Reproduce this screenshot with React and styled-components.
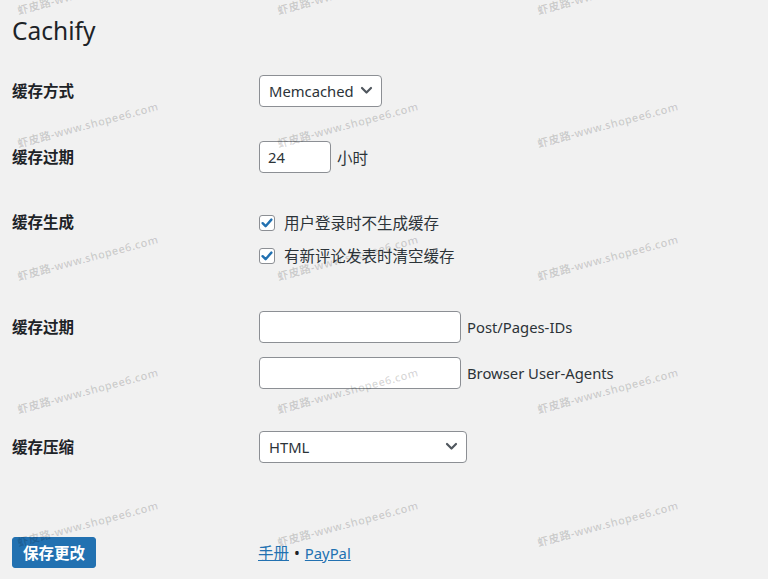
import React from "react";
import styled, { createGlobalStyle } from "styled-components";

const GlobalStyle = createGlobalStyle`
  html, body {
    margin: 0;
    padding: 0;
    background: #f1f1f1;
  }
  body {
    font-family: "Noto Sans", "Noto Sans CJK SC", sans-serif;
    color: #1d2327;
  }
  * { box-sizing: border-box; }
`;

const Page = styled.div`
  position: relative;
  min-height: 579px;
  overflow: hidden;
  padding: 0 12px;
`;

const Title = styled.h1`
  margin: 14px 0 0;
  font-size: 24.5px;
  font-weight: 400;
  line-height: 34px;
  color: #1d2327;
`;

const Row = styled.div`
  display: grid;
  grid-template-columns: 247px 1fr;
  align-items: start;
  padding-top: ${(p) => p.$space}px;
`;

const Label = styled.div`
  font-weight: 700;
  font-size: 15.5px;
  line-height: ${(p) => p.$line || 32}px;
  color: #1d2327;
`;

const Cell = styled.div`
  display: flex;
  flex-direction: column;
  gap: ${(p) => p.$gap || 0}px;
`;

const Line = styled.div`
  display: flex;
  align-items: center;
  gap: 6px;
  height: 32px;
  color: #2c3338;
`;

/* Latin copy runs a touch smaller than the CJK copy */
const Note = styled.span`
  font-size: ${(p) => (p.$latin ? 14.8 : 15.5)}px;
`;

const SelectWrap = styled.div`
  position: relative;
  width: ${(p) => p.$width}px;
  height: 32px;
`;

const Select = styled.select`
  appearance: none;
  width: 100%;
  height: 100%;
  margin: 0;
  padding: 0 24px 0 9px;
  font-family: "Noto Sans", "Noto Sans CJK SC", sans-serif;
  font-size: 14.8px;
  color: #2c3338;
  background: #fff;
  border: 1px solid #8c8f94;
  border-radius: 4px;
  outline: none;
`;

const Chevron = styled.svg`
  position: absolute;
  right: 9px;
  top: 10px;
  width: 13px;
  height: 11px;
  pointer-events: none;
`;

const TextInput = styled.input`
  width: ${(p) => p.$width}px;
  height: 32px;
  margin: 0;
  padding: 0 8px;
  font-family: "Noto Sans", "Noto Sans CJK SC", sans-serif;
  font-size: 14.8px;
  color: #2c3338;
  background: #fff;
  border: 1px solid #8c8f94;
  border-radius: 4px;
  outline: none;
`;

const CheckLine = styled.label`
  display: flex;
  align-items: center;
  gap: 9px;
  height: 33px;
  font-size: 15.5px;
  color: #2c3338;
`;

const CheckBox = styled.span`
  display: inline-flex;
  align-items: center;
  justify-content: center;
  width: 16px;
  height: 16px;
  background: #fff;
  border: 1px solid #8c8f94;
  border-radius: 3px;
  flex: none;
`;

const Button = styled.button`
  height: 31px;
  padding: 0 10px;
  font-family: "Noto Sans", "Noto Sans CJK SC", sans-serif;
  font-size: 15.5px;
  font-weight: 700;
  color: #fff;
  background: #2271b1;
  border: 1px solid #2271b1;
  border-radius: 3px;
  justify-self: start;
`;

const Links = styled.div`
  display: flex;
  align-items: center;
  height: 31px;
  gap: 5px;
  margin-left: -1px;
  font-size: 15.5px;
  color: #1d2327;
`;

const Link = styled.a`
  color: #2271b1;
  text-decoration: underline;
  font-size: ${(p) => (p.$latin ? 14.8 : 15.5)}px;
`;

const MarkLayer = styled.div`
  position: absolute;
  top: -76px;
  left: -42px;
  display: grid;
  grid-template-columns: repeat(3, 260px);
  grid-auto-rows: 133px;
  pointer-events: none;
`;

const Mark = styled.span`
  align-self: center;
  justify-self: center;
  transform: rotate(-15deg);
  white-space: nowrap;
  font-size: 11px;
  font-weight: 600;
  letter-spacing: 0.4px;
  color: rgba(0, 0, 0, 0.16);
`;

const ChevronIcon = () => (
  <Chevron viewBox="0 0 13 11">
    <polyline
      points="2,3 6.5,7.5 11,3"
      fill="none"
      stroke="#50575e"
      strokeWidth="2.2"
      strokeLinecap="round"
      strokeLinejoin="round"
    />
  </Chevron>
);

const Check = ({ children }) => (
  <CheckLine>
    <CheckBox>
      <svg width="14" height="14" viewBox="0 0 14 14">
        <polyline
          points="2.6,7.2 5.6,10.2 11.4,3.6"
          fill="none"
          stroke="#2271b1"
          strokeWidth="2.4"
          strokeLinecap="round"
          strokeLinejoin="round"
        />
      </svg>
    </CheckBox>
    {children}
  </CheckLine>
);

const marks = Array.from({ length: 15 });

export default function App() {
  return (
    <>
      <GlobalStyle />
      <Page>
        <Title>Cachify</Title>

        <Row $space={27}>
          <Label>缓存方式</Label>
          <Cell>
            <SelectWrap $width={123}>
              <Select defaultValue="memcached">
                <option value="memcached">Memcached</option>
              </Select>
              <ChevronIcon />
            </SelectWrap>
          </Cell>
        </Row>

        <Row $space={34}>
          <Label>缓存过期</Label>
          <Line>
            <TextInput $width={72} defaultValue="24" />
            <Note>小时</Note>
          </Line>
        </Row>

        <Row $space={33}>
          <Label $line={33}>缓存生成</Label>
          <Cell>
            <Check>用户登录时不生成缓存</Check>
            <Check>有新评论发表时清空缓存</Check>
          </Cell>
        </Row>

        <Row $space={39}>
          <Label>缓存过期</Label>
          <Cell $gap={14}>
            <Line>
              <TextInput $width={202} />
              <Note $latin>Post/Pages-IDs</Note>
            </Line>
            <Line>
              <TextInput $width={202} />
              <Note $latin>Browser User-Agents</Note>
            </Line>
          </Cell>
        </Row>

        <Row $space={42}>
          <Label>缓存压缩</Label>
          <Cell>
            <SelectWrap $width={208}>
              <Select defaultValue="html">
                <option value="html">HTML</option>
              </Select>
              <ChevronIcon />
            </SelectWrap>
          </Cell>
        </Row>

        <Row $space={74}>
          <Button type="button">保存更改</Button>
          <Links>
            <Link href="#">手册</Link>
            <span>•</span>
            <Link href="#" $latin>PayPal</Link>
          </Links>
        </Row>

        <MarkLayer>
          {marks.map((_, i) => (
            <Mark key={i}>虾皮路-www.shopee6.com</Mark>
          ))}
        </MarkLayer>
      </Page>
    </>
  );
}
